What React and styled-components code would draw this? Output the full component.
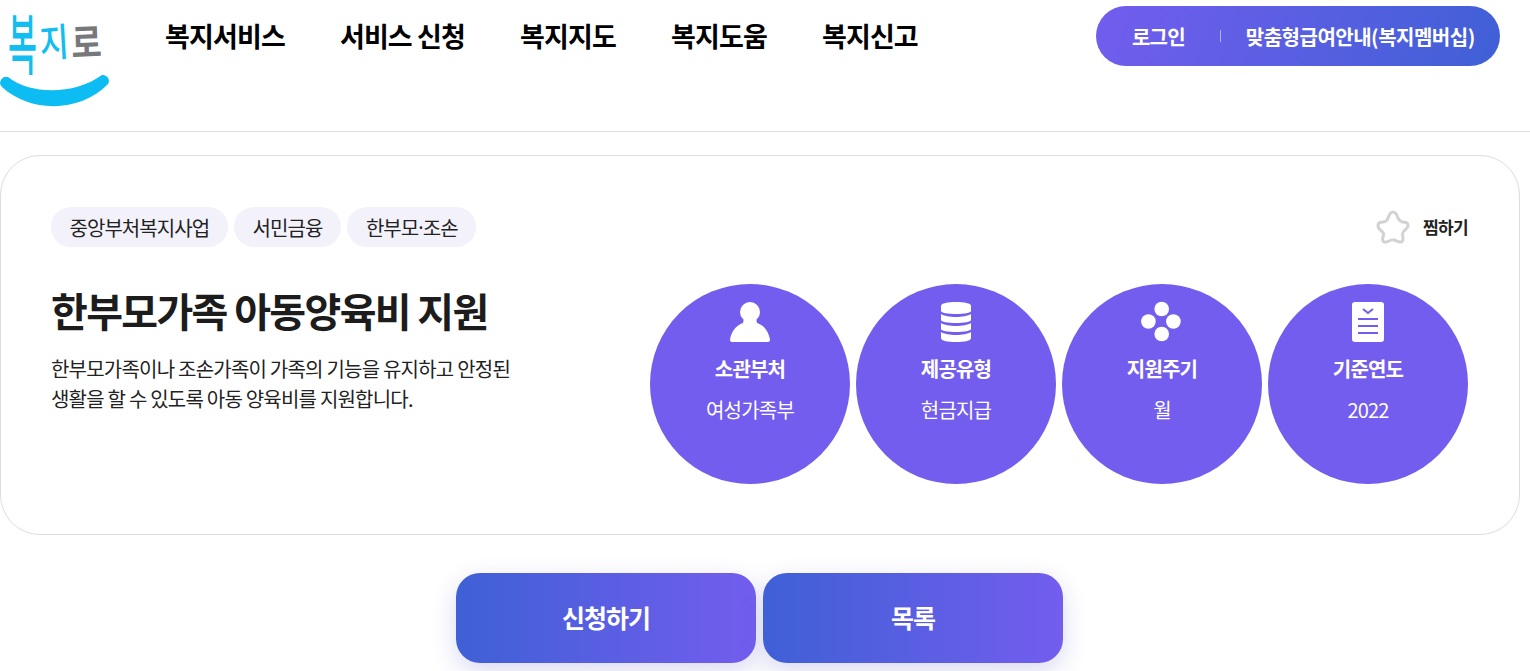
import React from "react";
import styled, { createGlobalStyle } from "styled-components";

const Global = createGlobalStyle`
  html, body { margin: 0; padding: 0; background: #fff; overflow: hidden; }
  body { font-family: "Noto Sans CJK KR", "Noto Sans", sans-serif; color: #111; }
  * { box-sizing: border-box; }
`;
const Page = styled.div`width: 1530px; height: 671px; overflow: hidden;`;
const Header = styled.header`
  height: 132px; border-bottom: 1px solid #ddd; display: flex; align-items: flex-start;
`;
const Logo = styled.a`
  width: 111px; height: 110px; display: flex; flex-direction: column; flex: none;
`;
const LogoWord = styled.div`
  height: 74px; display: flex; align-items: center; padding: 6px 0 0 7px; line-height: 1;
`;
const LogoChar = styled.span`
  display: inline-block; width: ${p => p.$w}px; text-align: center; color: ${p => p.$c};
  font-size: ${p => p.$s}px; font-weight: ${p => p.$b};
  transform: scale(${p => p.$sx}, ${p => p.$sy}) rotate(${p => p.$r}deg);
`;
const Smile = styled.svg`display: block;`;
const Nav = styled.nav`display: flex; gap: 55px; margin-left: 54px; padding-top: 17px;`;
const NavItem = styled.a`font-size: 27px; font-weight: 700; line-height: 38px; letter-spacing: -0.86px; color: #000; white-space: nowrap;`;
const Pill = styled.div`
  margin: 6px 30px 0 auto; width: 404px; height: 60px; border-radius: 30px;
  background: linear-gradient(110deg, #735dee 0%, #3f60d6 100%);
  display: flex; align-items: center; color: #fff; font-size: 20px; font-weight: 700; letter-spacing: -0.8px;
  padding-left: 36px; white-space: nowrap;
`;
const PillLink = styled.span`letter-spacing: -0.5px;`;
const Divider = styled.i`width: 1px; height: 12px; background: rgba(255,255,255,.5); margin: 0 25px 0 35px;`;
const Main = styled.main`padding: 23px 10px 0 0;`;
const Card = styled.section`
  width: 1520px; height: 380px; border: 1px solid #ddd; border-radius: 40px; padding: 51px 50px 0 50px;
  display: flex; flex-direction: column;
`;
const TopRow = styled.div`display: flex; align-items: center; justify-content: space-between;`;
const Tags = styled.div`display: flex; gap: 6.5px;`;
const Tag = styled.span`
  height: 40px; border-radius: 20px; background: #f3f2fb; padding: 0 18.5px; display: flex; align-items: center;
  font-size: 20px; letter-spacing: -0.95px; color: #222; white-space: pre;
`;
const TagDot = styled.span`font-family: "Noto Sans", sans-serif;`;
const Fav = styled.div`display: flex; align-items: center; gap: 13px; padding-right: 1px; font-size: 17px; font-weight: 700; letter-spacing: -0.68px; color: #222;`;
const FavLabel = styled.span`padding-bottom: 2px;`;
const Body = styled.div`display: flex; justify-content: space-between; margin-top: 37px;`;
const Intro = styled.div`width: 480px;`;
const Title = styled.h1`margin: -2px 0 0; font-size: 40px; line-height: 56px; font-weight: 700; letter-spacing: -1.65px; color: #1c1c1c; white-space: nowrap;`;
const Desc = styled.p`margin: 16px 0 0; font-size: 20px; line-height: 30px; letter-spacing: -0.78px; color: #222; word-break: keep-all;`;
const Circles = styled.div`display: flex; gap: 6px; margin-right: 1px;`;
const Circle = styled.div`
  width: 200px; height: 200px; border-radius: 50%; background: #735dee; color: #fff;
  display: flex; flex-direction: column; align-items: center; padding-top: 17px;
`;
const IconSlot = styled.svg`display: block; flex: none;`;
const CircleTitle = styled.strong`margin-top: 10px; font-size: 20px; line-height: 32px; font-weight: 700; letter-spacing: -0.8px;`;
const CircleValue = styled.span`margin-top: 9px; font-size: 20px; line-height: 32px; font-weight: 400; letter-spacing: -0.8px;`;
const Actions = styled.div`display: flex; justify-content: center; gap: 7px; margin-top: 38px; padding-right: 1px;`;
const ActionBtn = styled.a`
  width: 300px; height: 90px; border-radius: 24px; color: #fff; font-size: 25px; font-weight: 700; letter-spacing: -1px;
  background: linear-gradient(90deg, #3f60d6 0%, #735dee 100%);
  box-shadow: 0 8px 24px rgba(80, 80, 200, .22);
  display: flex; align-items: center; justify-content: center; padding-bottom: 2px;
`;

const Person = () => (
  <IconSlot width="44" height="42" viewBox="0 0 44 42" fill="#fff">
    <circle cx="22" cy="11" r="10" />
    <path d="M16 17 L28 17 L29 22 C36 24 41 31 42 39 C42 41 40 41 38 41 L6 41 C4 41 2 41 2 39 C3 31 8 24 15 22 Z" />
  </IconSlot>
);
const Stack = () => (
  <IconSlot width="32" height="42" viewBox="0 0 32 42" fill="#fff">
    <path d="M1 5 C1 2 8 1 16 1 C24 1 31 2 31 5 L31 10 C31 12 24 13 16 13 C8 13 1 12 1 10 Z" />
    <path d="M1 13 C4 15 10 16 16 16 C22 16 28 15 31 13 L31 19 C31 21 24 22 16 22 C8 22 1 21 1 19 Z" />
    <path d="M1 22 C4 24 10 25 16 25 C22 25 28 24 31 22 L31 28 C31 30 24 31 16 31 C8 31 1 30 1 28 Z" />
    <path d="M1 31 C4 33 10 34 16 34 C22 34 28 33 31 31 L31 37 C31 40 24 41 16 41 C8 41 1 40 1 37 Z" />
  </IconSlot>
);
const Dots = () => (
  <IconSlot width="42" height="42" viewBox="0 0 42 42" fill="#fff">
    <circle cx="20.7" cy="8" r="7.3" />
    <circle cx="7.4" cy="20.5" r="7.3" />
    <circle cx="32.4" cy="20.5" r="7.3" />
    <circle cx="20.7" cy="33" r="7.3" />
  </IconSlot>
);
const Doc = () => (
  <IconSlot width="34" height="42" viewBox="0 0 34 42">
    <rect x="1" y="1" width="32" height="40" rx="3" fill="#fff" />
    <path d="M12 8 L17 12 L22 8" fill="none" stroke="#735dee" strokeWidth="2" />
    <path d="M7 18 H27 M7 25 H27 M7 32 H27" fill="none" stroke="#735dee" strokeWidth="2" />
  </IconSlot>
);
const Star = () => (
  <svg width="34" height="34" viewBox="0 0 34 34" fill="none" stroke="#d2d2d2" strokeWidth="3" strokeLinejoin="round">
    <path d="M17 2 C20 2 21 5 22 8 C23 11 24 11 27 12 C30 12 32 13 32 15.5 C32 18 30 19 28 21 C26 23 26 24 27 27 C27 30 27 32 24.5 32 C22 32 20 30.5 18 30 C16 29.5 15 30 13 31 C11 32 8 33 7 31 C6 29 7 27 7.5 25 C8 23 7 22 5 20.5 C3 19 2 17 2 15.5 C2 13 4 12 7 12 C10 11.5 11 11 12 8 C13 5 14 2 17 2 Z" />
  </svg>
);

const nav = ["복지서비스", "서비스 신청", "복지지도", "복지도움", "복지신고"];
const facts = [
  { icon: <Person />, t: "소관부처", v: "여성가족부" },
  { icon: <Stack />, t: "제공유형", v: "현금지급" },
  { icon: <Dots />, t: "지원주기", v: "월" },
  { icon: <Doc />, t: "기준연도", v: "2022" },
];

export default function App() {
  return (
    <Page>
      <Global />
      <Header>
        <Logo>
          <LogoWord>
            <LogoChar $w={31} $s={30} $b={500} $sx={1.05} $sy={2.2} $r={0} $c="#12bdf0">복</LogoChar>
            <LogoChar $w={32} $s={30} $b={500} $sx={1.05} $sy={1.3} $r={-4} $c="#12bdf0">지</LogoChar>
            <LogoChar $w={33} $s={30} $b={700} $sx={1.1} $sy={1.3} $r={-2} $c="#77787c">로</LogoChar>
          </LogoWord>
          <Smile width="111" height="36" viewBox="0 0 111 36" fill="#0cbcf2">
            <path d="M8 3 C30 21 75 21 102 1 A6 6 0 0 1 108 10 C80 39 30 39 2 13 A6 6 0 0 1 8 3 Z" />
          </Smile>
        </Logo>
        <Nav>
          {nav.map(n => <NavItem key={n}>{n}</NavItem>)}
        </Nav>
        <Pill>
          <span>로그인</span>
          <Divider />
          <PillLink>맞춤형급여안내(복지멤버십)</PillLink>
        </Pill>
      </Header>
      <Main>
        <Card>
          <TopRow>
            <Tags>
              <Tag>중앙부처복지사업</Tag>
              <Tag>서민금융</Tag>
              <Tag>한부모<TagDot>·</TagDot>조손</Tag>
            </Tags>
            <Fav><Star /><FavLabel>찜하기</FavLabel></Fav>
          </TopRow>
          <Body>
            <Intro>
              <Title>한부모가족 아동양육비 지원</Title>
              <Desc>한부모가족이나 조손가족이 가족의 기능을 유지하고 안정된 생활을 할 수 있도록 아동 양육비를 지원합니다.</Desc>
            </Intro>
            <Circles>
              {facts.map(f => (
                <Circle key={f.t}>
                  {f.icon}
                  <CircleTitle>{f.t}</CircleTitle>
                  <CircleValue>{f.v}</CircleValue>
                </Circle>
              ))}
            </Circles>
          </Body>
        </Card>
        <Actions>
          <ActionBtn>신청하기</ActionBtn>
          <ActionBtn>목록</ActionBtn>
        </Actions>
      </Main>
    </Page>
  );
}
